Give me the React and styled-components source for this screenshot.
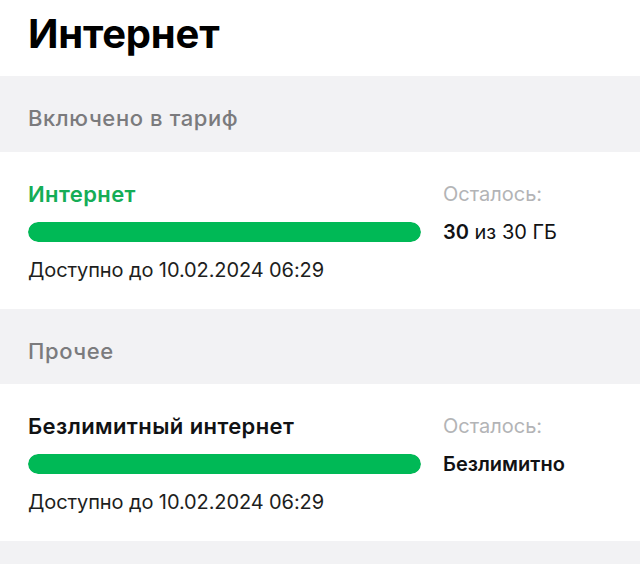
import React from "react";
import styled, { createGlobalStyle } from "styled-components";

const Global = createGlobalStyle`
  html, body { margin: 0; padding: 0; background: #ffffff; }
  body { font-family: Inter, Roboto, "Noto Sans", Arial, sans-serif; color: #1d2023; -webkit-font-smoothing: antialiased; }
`;

const Page = styled.div`
  width: 640px;
  height: 564px;
  overflow: hidden;
  display: flex;
  flex-direction: column;
  background: #ffffff;
`;

const Title = styled.h1`
  margin: 0;
  height: 76px;
  flex-shrink: 0;
  box-sizing: border-box;
  padding: 10px 28px 0;
  font-size: 40px;
  line-height: 48px;
  font-weight: 700;
  color: #000000;
  letter-spacing: -0.2px;
`;

const Section = styled.div`
  height: ${(p) => p.$h}px;
  box-sizing: border-box;
  background: #f2f2f4;
  padding: 28px 28px 0;
  font-size: 22px;
  line-height: 28px;
  font-weight: 500;
  letter-spacing: 0.6px;
  color: #7b7b7d;
  flex-shrink: 0;
`;

const Card = styled.div`
  display: grid;
  grid-template-columns: 1fr 169px;
  column-gap: 22px;
  row-gap: 14px;
  align-items: center;
  padding: 30px 28px 27px;
  box-sizing: border-box;
  flex-shrink: 0;
`;

const Name = styled.div`
  font-size: 22px;
  line-height: 24px;
  font-weight: 600;
  letter-spacing: 0.4px;
  color: ${(p) => (p.$green ? "#15ad56" : "#111214")};
`;

const Label = styled.div`
  font-size: 20px;
  line-height: 24px;
  font-weight: 400;
  color: #b3b4b6;
`;

const Track = styled.div`
  height: 20px;
  border-radius: 10px;
  background: #e8e9eb;
  overflow: hidden;
`;

const Fill = styled.div`
  height: 100%;
  border-radius: 10px;
  background: #00b956;
`;

const Value = styled.div`
  font-size: 20px;
  line-height: 24px;
  color: #111214;
  font-weight: ${(p) => (p.$bold ? 600 : 400)};
  b { font-weight: 600; }
`;

const DateText = styled.div`
  grid-column: 1 / -1;
  font-size: 20px;
  line-height: 24px;
  color: #1d1e20;
  letter-spacing: -0.1px;
`;

const Item = ({ name, green, value, bold, pct }) => (
  <Card>
    <Name $green={green}>{name}</Name>
    <Label>Осталось:</Label>
    <Track>
      <Fill style={{ width: `${pct}%` }} />
    </Track>
    <Value $bold={bold}>{value}</Value>
    <DateText>Доступно до 10.02.2024 06:29</DateText>
  </Card>
);

export default function App() {
  return (
    <Page>
      <Global />
      <Title>Интернет</Title>
      <Section $h={76}>Включено в тариф</Section>
      <Item
        name="Интернет"
        green
        pct={100}
        value={
          <>
            <b>30</b> из 30 ГБ
          </>
        }
      />
      <Section $h={75}>Прочее</Section>
      <Item name="Безлимитный интернет" pct={100} bold value="Безлимитно" />
      <Section $h={40} />
    </Page>
  );
}
